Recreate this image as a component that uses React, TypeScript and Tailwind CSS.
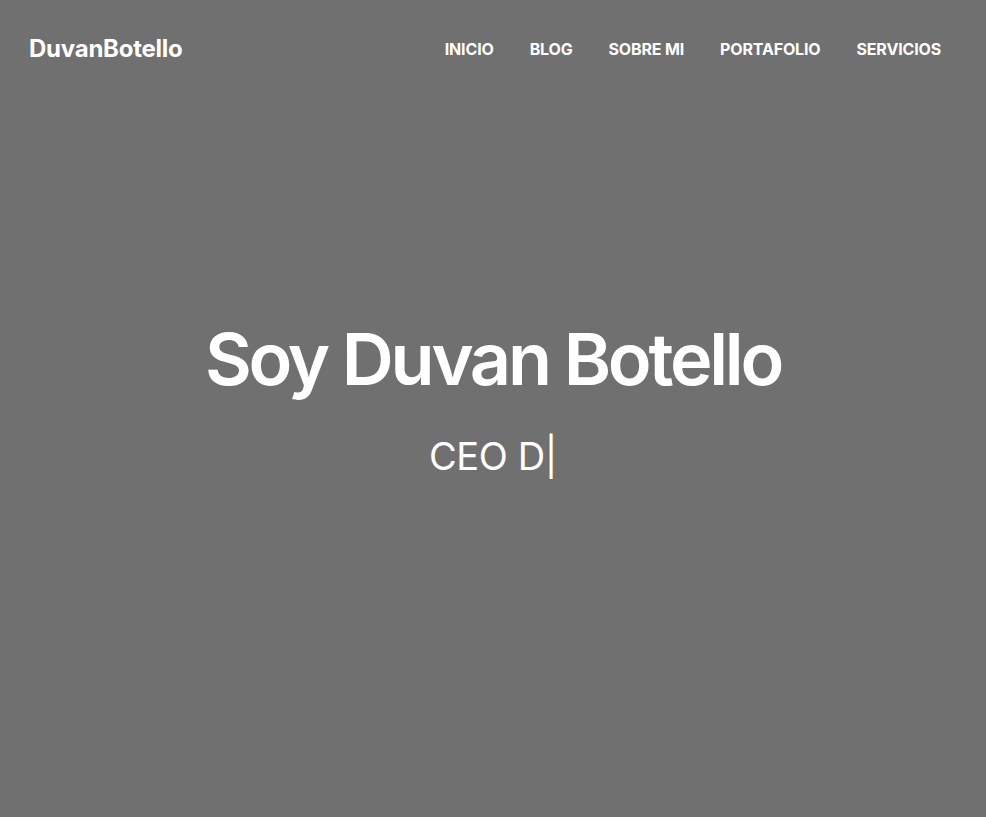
export default function App() {
  const links = ['Inicio', 'Blog', 'Sobre mi', 'Portafolio', 'Servicios'];

  return (
    <div className="min-h-screen bg-[#707070] text-white font-['Inter',sans-serif] flex flex-col">
      {/* Header */}
      <header className="flex items-center justify-between pl-[29px] pr-[45px] h-[98px]">
        <a href="#" className="text-[24px] font-bold tracking-[-0.01em]">
          DuvanBotello
        </a>
        <nav className="flex items-center gap-[36px]">
          {links.map((link) => (
            <a key={link} href="#" className="text-[16px] font-bold uppercase tracking-[-0.01em]">
              {link}
            </a>
          ))}
        </nav>
      </header>

      {/* Hero */}
      <section className="flex flex-col items-center pt-[225px]">
        <h1 className="text-[72px] font-semibold leading-none tracking-[-0.045em]">Soy Duvan Botello</h1>
        <p className="mt-[42px] text-[38px] font-normal leading-none tracking-[-0.01em]">CEO D|</p>
      </section>
    </div>
  );
}
